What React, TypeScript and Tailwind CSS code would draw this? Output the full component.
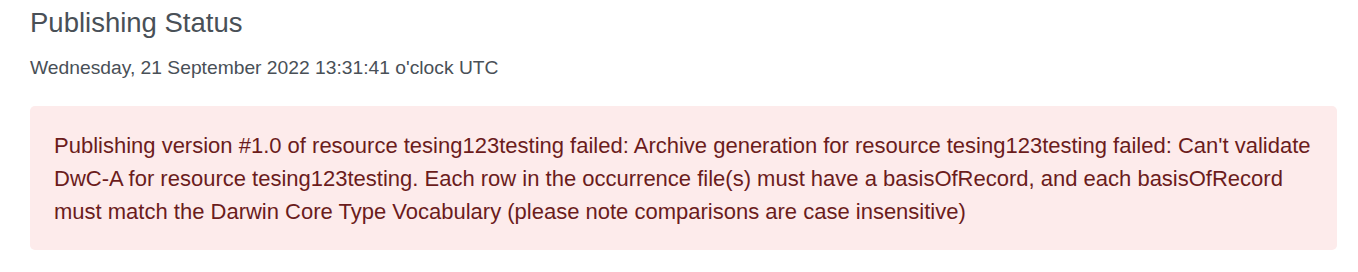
export default function App() {
  return (
    <div className="bg-white w-[1358px] h-[272px] pl-[30px] pr-[21px] pt-[5px]" style={{ fontFamily: '"Liberation Sans", Arial, sans-serif' }}>
      <h1 className="text-[27.5px] leading-[36px] text-[#495057] font-normal">Publishing Status</h1>
      <p className="mt-[15px] text-[19.25px] leading-[24px] text-[#495057]">Wednesday, 21 September 2022 13:31:41 o'clock UTC</p>
      <div className="mt-[26px] rounded-[5px] bg-[#fdebeb] pl-6 pr-4 pt-[23px] pb-[22px] text-[#6b1c1c] text-[22px] leading-[33px]">
        Publishing version #1.0 of resource tesing123testing failed: Archive generation for resource tesing123testing failed: Can't validate DwC-A for resource tesing123testing. Each row in the occurrence file(s) must have a basisOfRecord, and each basisOfRecord must match the Darwin Core Type Vocabulary (please note comparisons are case insensitive)
      </div>
    </div>
  );
}
